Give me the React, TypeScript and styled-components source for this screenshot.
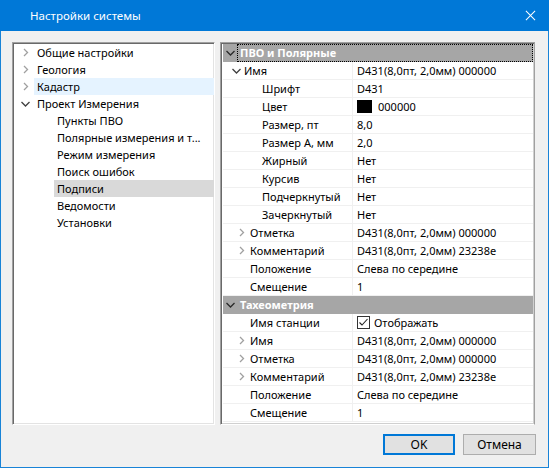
import styled, { createGlobalStyle } from 'styled-components';

const GlobalStyle = createGlobalStyle`
  html, body {
    margin: 0;
    padding: 0;
    background: #ffffff;
  }
  body {
    font-family: "Noto Sans", "Segoe UI", Arial, sans-serif;
    font-size: 11px;
    color: #000;
  }
`;

type TreeItem = { label: string; level: number; arrow?: 'right' | 'down'; state?: 'hover' | 'selected' };

const treeItems: TreeItem[] = [
  { label: 'Общие настройки', level: 0, arrow: 'right' },
  { label: 'Геология', level: 0, arrow: 'right' },
  { label: 'Кадастр', level: 0, arrow: 'right', state: 'hover' },
  { label: 'Проект Измерения', level: 0, arrow: 'down' },
  { label: 'Пункты ПВО', level: 1 },
  { label: 'Полярные измерения и т...', level: 1 },
  { label: 'Режим измерения', level: 1 },
  { label: 'Поиск ошибок', level: 1 },
  { label: 'Подписи', level: 1, state: 'selected' },
  { label: 'Ведомости', level: 1 },
  { label: 'Установки', level: 1 },
];

type Row =
  | { kind: 'group'; label: string; focused?: boolean }
  | { kind: 'prop'; label: string; value: string; level: number; arrow?: 'right' | 'down'; swatch?: boolean; check?: boolean };

const rows: Row[] = [
  { kind: 'group', label: 'ПВО и Полярные', focused: true },
  { kind: 'prop', label: 'Имя', value: 'D431(8,0пт, 2,0мм) 000000', level: 1, arrow: 'down' },
  { kind: 'prop', label: 'Шрифт', value: 'D431', level: 2 },
  { kind: 'prop', label: 'Цвет', value: '000000', level: 2, swatch: true },
  { kind: 'prop', label: 'Размер, пт', value: '8,0', level: 2 },
  { kind: 'prop', label: 'Размер А, мм', value: '2,0', level: 2 },
  { kind: 'prop', label: 'Жирный', value: 'Нет', level: 2 },
  { kind: 'prop', label: 'Курсив', value: 'Нет', level: 2 },
  { kind: 'prop', label: 'Подчеркнутый', value: 'Нет', level: 2 },
  { kind: 'prop', label: 'Зачеркнутый', value: 'Нет', level: 2 },
  { kind: 'prop', label: 'Отметка', value: 'D431(8,0пт, 2,0мм) 000000', level: 1, arrow: 'right' },
  { kind: 'prop', label: 'Комментарий', value: 'D431(8,0пт, 2,0мм) 23238e', level: 1, arrow: 'right' },
  { kind: 'prop', label: 'Положение', value: 'Слева по середине', level: 1 },
  { kind: 'prop', label: 'Смещение', value: '1', level: 1 },
  { kind: 'group', label: 'Тахеометрия' },
  { kind: 'prop', label: 'Имя станции', value: 'Отображать', level: 1, check: true },
  { kind: 'prop', label: 'Имя', value: 'D431(8,0пт, 2,0мм) 000000', level: 1, arrow: 'right' },
  { kind: 'prop', label: 'Отметка', value: 'D431(8,0пт, 2,0мм) 000000', level: 1, arrow: 'right' },
  { kind: 'prop', label: 'Комментарий', value: 'D431(8,0пт, 2,0мм) 23238e', level: 1, arrow: 'right' },
  { kind: 'prop', label: 'Положение', value: 'Слева по середине', level: 1 },
  { kind: 'prop', label: 'Смещение', value: '1', level: 1 },
];

const Chevron = ({ dir, color }: { dir: 'right' | 'down'; color: string }) =>
  dir === 'right' ? (
    <svg width="8" height="9" viewBox="0 0 8 9">
      <polyline points="2,1 5.5,4.5 2,8" fill="none" stroke={color} strokeWidth="1.3" />
    </svg>
  ) : (
    <svg width="9" height="8" viewBox="0 0 9 8">
      <polyline points="0.5,2 4.5,6 8.5,2" fill="none" stroke={color} strokeWidth="1.3" />
    </svg>
  );

const App = () => {
  return (
    <>
      <GlobalStyle />
      <Window>
        <TitleBar>
          <Title>Настройки системы</Title>
          <CloseIcon viewBox="0 0 12 12">
            <path d="M1 1 L11 11 M11 1 L1 11" stroke="#fff" strokeWidth="1.1" />
          </CloseIcon>
        </TitleBar>
        <Body>
          <Panels>
            <TreePanel>
              {treeItems.map((item, i) => (
                <TreeRow key={i} $level={item.level}>
                  <TreeArrow>
                    {item.arrow && (
                      <Chevron dir={item.arrow} color={item.arrow === 'down' ? '#404040' : '#a0a0a0'} />
                    )}
                  </TreeArrow>
                  <TreeLabel $state={item.state}>{item.label}</TreeLabel>
                </TreeRow>
              ))}
            </TreePanel>
            <GridPanel>
              {rows.map((row, i) =>
                row.kind === 'group' ? (
                  <GroupRow key={i}>
                    <GroupArrow>
                      <Chevron dir="down" color="#2a2a2a" />
                    </GroupArrow>
                    <GroupLabel $focused={row.focused}>{row.label}</GroupLabel>
                  </GroupRow>
                ) : (
                  <PropRow key={i}>
                    <NameCell $indent={row.level === 2 ? 39 : row.arrow === 'down' ? 21 : 27}>
                      {row.arrow && (
                        <PropArrow $left={row.arrow === 'down' ? 9 : 15}>
                          <Chevron dir={row.arrow} color={row.arrow === 'down' ? '#404040' : '#a0a0a0'} />
                        </PropArrow>
                      )}
                      {row.label}
                    </NameCell>
                    <ValueCell>
                      {row.swatch && <Swatch />}
                      {row.check && (
                        <CheckBox viewBox="0 0 13 13">
                          <rect x="0.5" y="0.5" width="12" height="12" fill="#fff" stroke="#333" />
                          <polyline points="2.5,6.5 5,9 10.5,3" fill="none" stroke="#222" strokeWidth="1.1" />
                        </CheckBox>
                      )}
                      {row.value}
                    </ValueCell>
                  </PropRow>
                ),
              )}
            </GridPanel>
          </Panels>
          <Footer>
            <Button $primary>OK</Button>
            <Button>Отмена</Button>
          </Footer>
        </Body>
      </Window>
    </>
  );
};

export default App;

const Window = styled.div`
  width: 549px;
  height: 468px;
  box-sizing: border-box;
  border: 1px solid #1883d7;
  border-top: none;
  background: #f0f0f0;
  display: flex;
  flex-direction: column;
`;

const TitleBar = styled.div`
  height: 31px;
  margin: 0 -1px;
  background: #0078d7;
  display: flex;
  align-items: center;
  padding: 0 13px 0 30px;
  flex-shrink: 0;
`;

const Title = styled.div`
  flex: 1;
  color: #fff;
  font-size: 11.5px;
`;

const CloseIcon = styled.svg`
  width: 11px;
  height: 11px;
`;

const Body = styled.div`
  flex: 1;
  display: flex;
  flex-direction: column;
  padding: 11px 12px 12px 11px;
`;

const Panels = styled.div`
  display: flex;
  gap: 5px;
  height: 383px;
`;

const Sunken = styled.div`
  box-sizing: border-box;
  background: #fff;
  border-style: solid;
  border-width: 1px;
  border-color: #a0a0a0 #ffffff #ffffff #a0a0a0;
  box-shadow: inset 1px 1px 0 #696969, inset -1px -1px 0 #e3e3e3;
`;

const TreePanel = styled(Sunken)`
  width: 203px;
  padding: 1px 0 0 2px;
  overflow: hidden;
`;

const TreeRow = styled.div<{ $level: number }>`
  display: flex;
  align-items: center;
  height: 17px;
  padding-left: ${(p) => (p.$level === 0 ? 2 : 22)}px;
  white-space: nowrap;
`;

const TreeArrow = styled.span`
  width: 17px;
  flex-shrink: 0;
  display: flex;
  justify-content: center;
  align-items: center;
`;

const TreeLabel = styled.span<{ $state?: 'hover' | 'selected' }>`
  flex: 1;
  min-width: 0;
  overflow: hidden;
  height: 17px;
  line-height: 17px;
  padding-left: 3px;
  background: ${(p) =>
    p.$state === 'hover' ? '#e5f3ff' : p.$state === 'selected' ? '#d9d9d9' : 'transparent'};
`;

const GridPanel = styled(Sunken)`
  width: 315px;
  padding: 1px 1px 2px 2px;
  border-right-color: #a0a0a0;
  box-shadow: inset 1px 1px 0 #696969, inset -1px -1px 0 #d0d0d0;
  overflow: hidden;
`;

const GroupRow = styled.div`
  height: 18px;
  display: flex;
  align-items: center;
  background: #a6a6a6;
  color: #fff;
  font-weight: bold;
`;

const GroupArrow = styled.span`
  width: 14px;
  display: flex;
  justify-content: center;
`;

const GroupLabel = styled.span<{ $focused?: boolean }>`
  flex: 1;
  height: 18px;
  line-height: 17px;
  box-sizing: border-box;
  padding-left: 3px;
  outline: ${(p) => (p.$focused ? '1px dotted #000' : 'none')};
  outline-offset: -1px;
`;

const PropRow = styled.div`
  height: 18px;
  display: flex;
  box-sizing: border-box;
  border-bottom: 1px solid #f0f0f0;
`;

const NameCell = styled.div<{ $indent: number }>`
  width: 130px;
  box-sizing: border-box;
  display: flex;
  align-items: center;
  padding-left: ${(p) => p.$indent}px;
  border-right: 1px solid #f0f0f0;
  white-space: nowrap;
  position: relative;
`;

const PropArrow = styled.span<{ $left: number }>`
  position: absolute;
  left: ${(p) => p.$left}px;
  top: 0;
  height: 17px;
  display: flex;
  align-items: center;
`;

const ValueCell = styled.div`
  flex: 1;
  display: flex;
  align-items: center;
  padding-left: 4px;
  white-space: nowrap;
`;

const Swatch = styled.span`
  width: 15px;
  height: 13px;
  background: #000;
  margin-right: 6px;
`;

const CheckBox = styled.svg`
  width: 13px;
  height: 13px;
  margin-right: 4px;
`;

const Footer = styled.div`
  display: flex;
  justify-content: flex-end;
  gap: 8px;
  padding-top: 9px;
`;

const Button = styled.button<{ $primary?: boolean }>`
  width: ${(p) => (p.$primary ? 72 : 73)}px;
  height: 21px;
  box-sizing: border-box;
  font-family: inherit;
  font-size: 12px;
  background: #e1e1e1;
  border: ${(p) => (p.$primary ? '2px solid #0078d7' : '1px solid #adadad')};
  padding: 0;
  color: #000;
`;
